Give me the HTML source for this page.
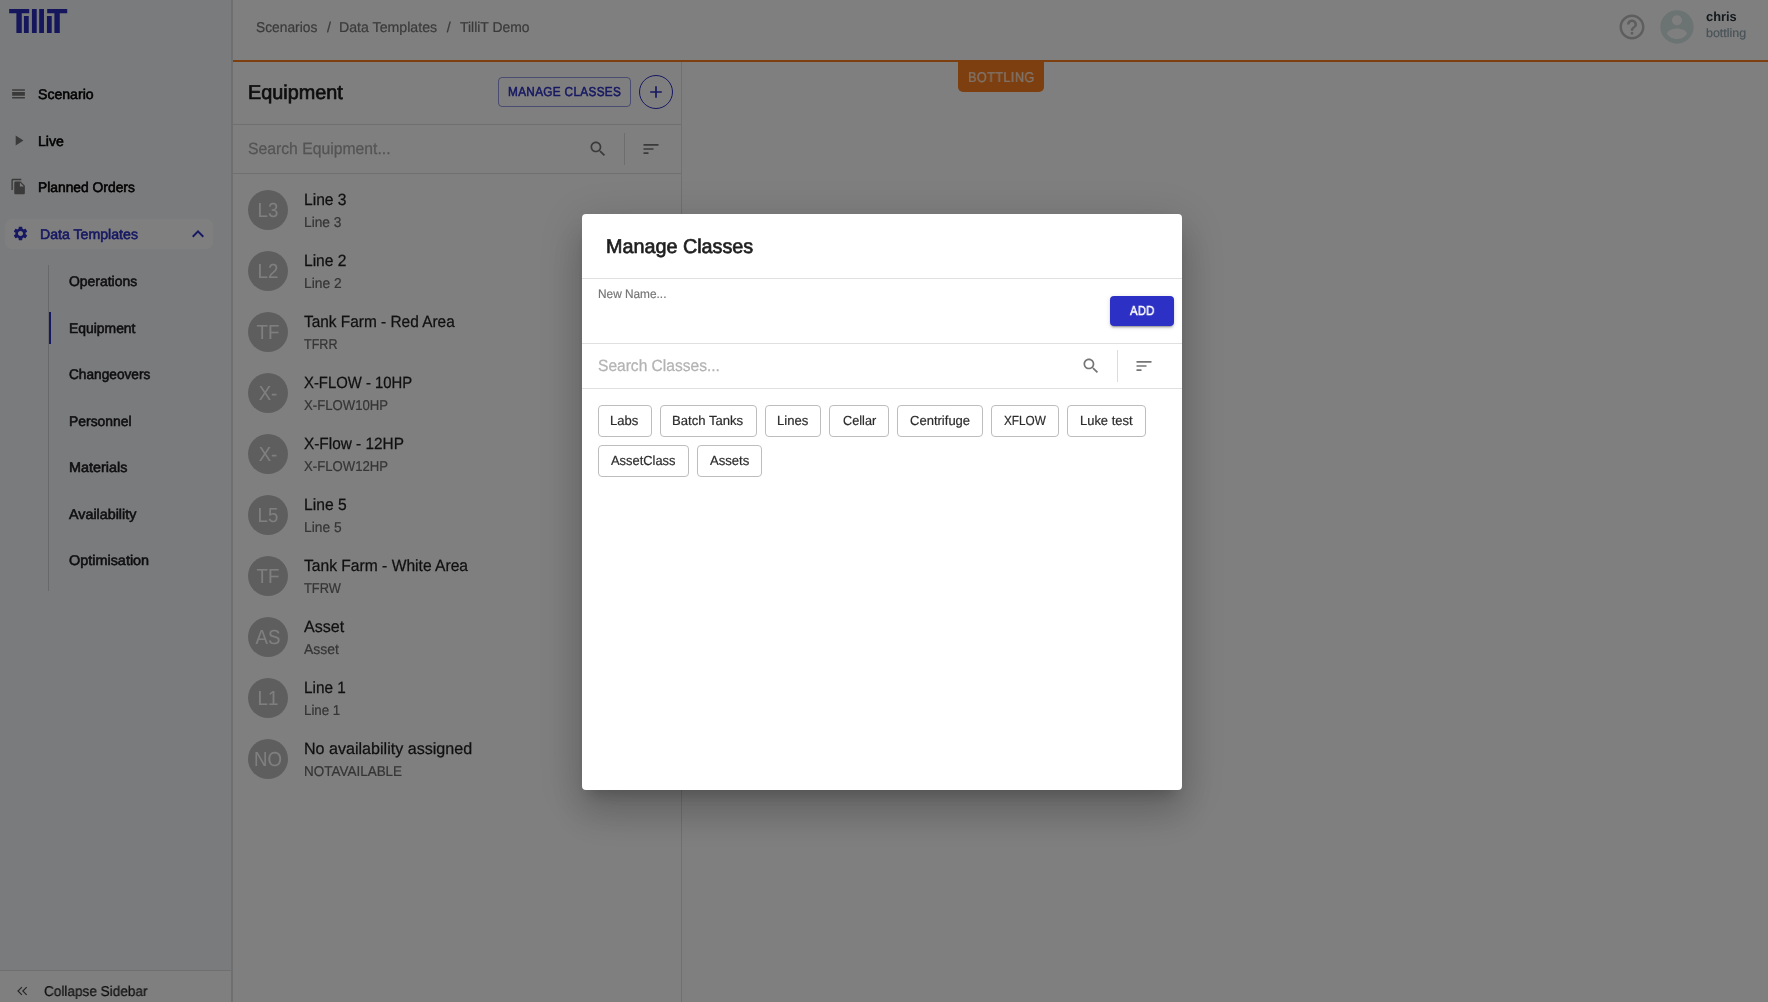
<!DOCTYPE html>
<html lang="en"><head><meta charset="utf-8"><title>TilliT - Equipment</title>
<style>
html,body{margin:0;padding:0}
body{width:1768px;height:1002px;overflow:hidden;background:#fff;font-family:"Liberation Sans",sans-serif;position:relative}
.t{position:absolute;line-height:1;white-space:pre;text-rendering:geometricPrecision}
.i{position:absolute;display:block;overflow:visible}
#app{position:absolute;left:0;top:0;width:1768px;height:1002px;overflow:hidden;background:#fff}
.sb{position:absolute;left:0;top:0;width:231px;height:1002px;background:#f4f6f8;border-right:1px solid #dedede}
.hl{position:absolute;left:5px;top:218.5px;width:208px;height:30.3px;border-radius:7px;background:#fff}
.vl{position:absolute;left:48px;top:265px;width:1px;height:325.5px;background:#d2d2d4}
.act{position:absolute;left:49px;top:312px;width:2px;height:32px;background:#2c30c4}
.cbar{position:absolute;left:0;top:971px;width:231px;height:31px;background:#fff}
.sbdiv{position:absolute;left:0;top:970px;width:231px;height:1px;background:#e0e0e0}
.oline{position:absolute;left:233px;top:60px;width:1535px;height:2px;background:#fb7f1e}
.tag{position:absolute;left:958px;top:62px;width:86px;height:30px;background:#fb7f1e;border-radius:0 0 5px 5px}
.panel{position:absolute;left:233px;top:62px;width:448px;height:940px;border-right:1px solid #e0e0e0;background:#fff}
.mainbl{position:absolute;left:232px;top:0;width:1px;height:1002px;background:#dedede}
.hd1{position:absolute;left:233px;top:124px;width:448px;height:1px;background:#e0e0e0}
.hd2{position:absolute;left:233px;top:173px;width:448px;height:1px;background:#e0e0e0}
.mbtn{position:absolute;left:498px;top:77px;width:131px;height:28px;border:1px solid rgba(44,48,196,0.5);border-radius:4px}
.pbtn{position:absolute;left:639px;top:75px;width:32px;height:32px;border:1px solid #2c30c4;border-radius:50%}
.vdiv{position:absolute;width:1px;height:32px;background:#dcdcdc}
.av{position:absolute;left:248px;width:40px;height:40px;border-radius:50%;background:#bdbdbd}
.avt{left:248px;width:40px;height:40px;color:#fff;font-size:20.3px;line-height:40px;text-align:center;transform:translateY(0.6px) scaleX(0.92)}
.L{position:absolute;left:0;top:0;will-change:transform}
#bd{position:absolute;left:0;top:0;width:1768px;height:1002px;background:rgba(0,0,0,0.5)}
#modal{position:absolute;left:582px;top:214px;width:600px;height:576px;background:#fff;border-radius:4px;box-shadow:0 11px 15px -7px rgba(0,0,0,.2),0 24px 38px 3px rgba(0,0,0,.14),0 9px 46px 8px rgba(0,0,0,.12)}
.md{position:absolute;left:0;width:600px;height:1px;background:#e0e0e0}
.add{position:absolute;left:528px;top:82px;width:64px;height:30px;border-radius:4px;background:#2c30c4;box-shadow:0 3px 1px -2px rgba(0,0,0,.2),0 2px 2px 0 rgba(0,0,0,.14),0 1px 5px 0 rgba(0,0,0,.12)}
.chip{position:absolute;height:32px;box-sizing:border-box;border:1px solid #bdbdbd;border-radius:4px;}
</style></head>
<body>
<div id="app">
<div class="sb"></div>
<svg class="i" style="left:10.3px;top:85px" width="17" height="17" viewBox="0 0 24 24" fill="#757575" ><path d="M3 17h18v2H3zm0-7h18v5H3zm0-4h18v2H3z"/></svg>
<svg class="i" style="left:10.3px;top:132px" width="17" height="17" viewBox="0 0 24 24" fill="#757575" ><path d="M8 5v14l11-7z"/></svg>
<svg class="i" style="left:10.4px;top:178px" width="17" height="17" viewBox="0 0 24 24" fill="#757575" ><path d="M16 1H4c-1.1 0-2 .9-2 2v14h2V3h12V1zm-1 4l6 6v10c0 1.1-.9 2-2 2H7.99C6.89 23 6 22.1 6 21l.01-14c0-1.1.89-2 1.99-2h7zm-1 7h5.5L14 6.5V12z"/></svg>
<div class="hl"></div>
<svg class="i" style="left:12.0px;top:225px" width="17" height="17" viewBox="0 0 24 24" fill="#2c30c4" ><path d="M19.14 12.94c.04-.3.06-.61.06-.94 0-.32-.02-.64-.07-.94l2.03-1.58c.18-.14.23-.41.12-.61l-1.92-3.32c-.12-.22-.37-.29-.59-.22l-2.39.96c-.5-.38-1.03-.7-1.62-.94l-.36-2.54c-.04-.24-.24-.41-.48-.41h-3.84c-.24 0-.43.17-.47.41l-.36 2.54c-.59.24-1.13.57-1.62.94l-2.39-.96c-.22-.08-.47 0-.59.22L2.74 8.87c-.12.21-.08.47.12.61l2.03 1.58c-.05.3-.09.63-.09.94s.02.64.07.94l-2.03 1.58c-.18.14-.23.41-.12.61l1.92 3.32c.12.22.37.29.59.22l2.39-.96c.5.38 1.03.7 1.62.94l.36 2.54c.05.24.24.41.48.41h3.84c.24 0 .44-.17.47-.41l.36-2.54c.59-.24 1.13-.56 1.62-.94l2.39.96c.22.08.47 0 .59-.22l1.92-3.32c.12-.22.07-.47-.12-.61l-2.01-1.58zM12 15.6c-1.98 0-3.6-1.62-3.6-3.6s1.62-3.6 3.6-3.6 3.6 1.62 3.6 3.6-1.62 3.6-3.6 3.6z"/></svg>
<svg class="i" style="left:186px;top:222px" width="24" height="24" viewBox="0 0 24 24" fill="#2c30c4" ><path d="M12 8l-6 6 1.41 1.41L12 10.83l4.59 4.58L18 14z"/></svg>
<div class="vl"></div><div class="act"></div>
<div class="sbdiv"></div>
<div class="cbar"></div>
<svg class="i" style="left:14px;top:983px" width="16" height="16" viewBox="0 0 16 16" fill="none" stroke="#4a4a4a" stroke-width="1.15" stroke-linecap="butt" stroke-linejoin="miter"><path d="M7.9 4.1 4.0 8l3.9 3.9M12.7 4.1 8.8 8l3.9 3.9"/></svg>
<div class="panel"></div>
<div class="mainbl"></div>
<svg class="i" style="left:1617px;top:12px" width="30" height="30" viewBox="0 0 24 24" fill="#bcbcbc" ><path d="M11 18h2v-2h-2v2zm1-16C6.48 2 2 6.48 2 12s4.48 10 10 10 10-4.48 10-10S17.52 2 12 2zm0 18c-4.41 0-8-3.59-8-8s3.59-8 8-8 8 3.59 8 8-3.59 8-8 8zm0-14c-2.21 0-4 1.79-4 4h2c0-1.1.9-2 2-2s2 .9 2 2c0 2-3 1.75-3 5h2c0-2.25 3-2.5 3-5 0-2.21-1.79-4-4-4z"/></svg>
<svg class="i" style="left:1657px;top:7px" width="40" height="40" viewBox="0 0 24 24" fill="#d6e6e6" ><path d="M12 2C6.48 2 2 6.48 2 12s4.48 10 10 10 10-4.48 10-10S17.52 2 12 2zm0 3c1.66 0 3 1.34 3 3s-1.34 3-3 3-3-1.34-3-3 1.34-3 3-3zm0 14.2c-2.5 0-4.71-1.28-6-3.22.03-1.99 4-3.08 6-3.08 1.99 0 5.97 1.09 6 3.08-1.29 1.94-3.5 3.22-6 3.22z"/></svg>
<div class="tag"></div>
<div class="oline"></div><div class="hd1"></div><div class="hd2"></div>
<div class="mbtn"></div><div class="pbtn"></div>
<svg class="i" style="left:646px;top:82px" width="20" height="20" viewBox="0 0 24 24" fill="#2c30c4" ><path d="M19 13h-6v6h-2v-6H5v-2h6V5h2v6h6v2z"/></svg>
<svg class="i" style="left:587.5px;top:139px" width="20" height="20" viewBox="0 0 24 24" fill="#757575" ><path d="M15.5 14h-.79l-.28-.27C15.41 12.59 16 11.11 16 9.5 16 5.91 13.09 3 9.5 3S3 5.91 3 9.5 5.91 16 9.5 16c1.61 0 3.09-.59 4.23-1.57l.27.28v.79l5 4.99L20.49 19l-4.99-5zm-6 0C7.01 14 5 11.99 5 9.5S7.01 5 9.5 5 14 7.01 14 9.5 11.99 14 9.5 14z"/></svg>
<div class="vdiv" style="left:624px;top:133px"></div>
<svg class="i" style="left:640.5px;top:139px" width="20" height="20" viewBox="0 0 24 24" fill="#757575" ><path d="M3 18h6v-2H3v2zM3 6v2h18V6H3zm0 7h12v-2H3v2z"/></svg>
<div class="av" style="top:190px"></div>
<div class="av" style="top:251px"></div>
<div class="av" style="top:312px"></div>
<div class="av" style="top:373px"></div>
<div class="av" style="top:434px"></div>
<div class="av" style="top:495px"></div>
<div class="av" style="top:556px"></div>
<div class="av" style="top:617px"></div>
<div class="av" style="top:678px"></div>
<div class="av" style="top:739px"></div>
<div class="L">
<svg class="i" style="left:0;top:0" width="80" height="45" viewBox="0 0 80 45" font-family="Liberation Sans, sans-serif" font-weight="700" font-size="34.9" fill="#2a2cb8"><defs><clipPath id="lc"><rect x="0" y="9" width="80" height="24"/></clipPath><clipPath id="li"><rect x="0" y="16" width="80" height="17"/></clipPath></defs><g clip-path="url(#lc)"><text transform="translate(8.95,33) scale(0.955,1)" stroke="#2a2cb8" stroke-width="0.5">T</text></g><g clip-path="url(#li)"><text x="21.6" y="33">i</text></g><g clip-path="url(#lc)"><text x="29.5 36.7" y="33">ll</text></g><g clip-path="url(#li)"><text x="44.55" y="33">i</text></g><g clip-path="url(#lc)"><text transform="translate(46.95,33) scale(0.955,1)" stroke="#2a2cb8" stroke-width="0.5">T</text></g></svg>
<span class="t" style="left:37.60px;top:87px;color:#000;font-size:14.0px;-webkit-text-stroke:0.56px;transform:scaleX(1.0065);transform-origin:0 0;">Scenario</span>
<span class="t" style="left:37.60px;top:134px;color:#000;font-size:14.0px;-webkit-text-stroke:0.56px;transform:scaleX(1.0078);transform-origin:0 0;">Live</span>
<span class="t" style="left:37.60px;top:180px;color:#000;font-size:14.0px;-webkit-text-stroke:0.56px;transform:scaleX(0.9878);transform-origin:0 0;">Planned Orders</span>
<span class="t" style="left:39.60px;top:227px;color:#2c30c4;font-size:14.0px;-webkit-text-stroke:0.56px;transform:scaleX(1.0099);transform-origin:0 0;">Data Templates</span>
<span class="t" style="left:69.30px;top:274px;color:#1c1c20;font-size:14.0px;-webkit-text-stroke:0.56px;transform:scaleX(0.9948);transform-origin:0 0;">Operations</span>
<span class="t" style="left:69.30px;top:321px;color:#1c1c20;font-size:14.0px;-webkit-text-stroke:0.56px;transform:scaleX(0.9928);transform-origin:0 0;">Equipment</span>
<span class="t" style="left:69.30px;top:367px;color:#1c1c20;font-size:14.0px;-webkit-text-stroke:0.56px;transform:scaleX(0.9766);transform-origin:0 0;">Changeovers</span>
<span class="t" style="left:69.30px;top:414px;color:#1c1c20;font-size:14.0px;-webkit-text-stroke:0.56px;transform:scaleX(0.9931);transform-origin:0 0;">Personnel</span>
<span class="t" style="left:69.30px;top:460px;color:#1c1c20;font-size:14.0px;-webkit-text-stroke:0.56px;transform:scaleX(1.0295);transform-origin:0 0;">Materials</span>
<span class="t" style="left:69.30px;top:507px;color:#1c1c20;font-size:14.0px;-webkit-text-stroke:0.56px;transform:scaleX(1.0217);transform-origin:0 0;">Availability</span>
<span class="t" style="left:69.30px;top:553px;color:#1c1c20;font-size:14.0px;-webkit-text-stroke:0.56px;transform:scaleX(1.0299);transform-origin:0 0;">Optimisation</span>
<span class="t" style="left:43.72px;top:985px;color:#222;font-size:14.24px;-webkit-text-stroke:0.22px;transform:scaleX(0.9549);transform-origin:0 0;">Collapse Sidebar</span>
<span class="t" style="left:256.20px;top:21px;color:#757575;font-size:14.24px;-webkit-text-stroke:0.22px;transform:scaleX(0.9689);transform-origin:0 0;">Scenarios</span>
<span class="t" style="left:326.91px;top:21px;color:#757575;font-size:14.24px;-webkit-text-stroke:0.22px;">/</span>
<span class="t" style="left:339.06px;top:21px;color:#757575;font-size:14.24px;-webkit-text-stroke:0.22px;transform:scaleX(0.9945);transform-origin:0 0;">Data Templates</span>
<span class="t" style="left:446.71px;top:21px;color:#757575;font-size:14.24px;-webkit-text-stroke:0.22px;">/</span>
<span class="t" style="left:459.96px;top:21px;color:#757575;font-size:14.24px;-webkit-text-stroke:0.22px;transform:scaleX(0.9761);transform-origin:0 0;">TilliT Demo</span>
<span class="t" style="left:1705.84px;top:10px;color:#263238;font-size:13.0px;font-weight:700;transform:scaleX(0.9868);transform-origin:0 0;">chris</span>
<span class="t" style="left:1705.72px;top:27px;color:#90a4ae;font-size:12.2px;-webkit-text-stroke:0.19px;transform:scaleX(1.0233);transform-origin:0 0;">bottling</span>
<span class="t" style="left:968.16px;top:71px;color:rgba(255,255,255,0.78);font-size:14.24px;-webkit-text-stroke:0.22px;letter-spacing:0.350px;transform:scaleX(0.9005);transform-origin:0 0;">BOTTLING</span>
<span class="t" style="left:248.29px;top:83px;color:#1a1a1a;font-size:20.0px;-webkit-text-stroke:0.68px;transform:scaleX(0.9917);transform-origin:0 0;">Equipment</span>
<span class="t" style="left:508.29px;top:85px;color:#2c30c4;font-size:13.0px;-webkit-text-stroke:0.52px;letter-spacing:0.350px;transform:scaleX(0.9067);transform-origin:0 0;">MANAGE CLASSES</span>
<span class="t" style="left:248.09px;top:141px;color:#a8a8a8;font-size:16.27px;-webkit-text-stroke:0.26px;transform:scaleX(0.9672);transform-origin:0 0;">Search Equipment...</span>
<span class="t" style="left:304.10px;top:192px;color:#1f1f1f;font-size:16.27px;-webkit-text-stroke:0.26px;transform:scaleX(0.9585);transform-origin:0 0;">Line 3</span>
<span class="t" style="left:304.10px;top:216px;color:#6a6a6a;font-size:14.24px;-webkit-text-stroke:0.22px;transform:scaleX(0.9634);transform-origin:0 0;">Line 3</span>
<span class="t" style="left:304.10px;top:253px;color:#1f1f1f;font-size:16.27px;-webkit-text-stroke:0.26px;transform:scaleX(0.9576);transform-origin:0 0;">Line 2</span>
<span class="t" style="left:304.10px;top:277px;color:#6a6a6a;font-size:14.24px;-webkit-text-stroke:0.22px;transform:scaleX(0.9697);transform-origin:0 0;">Line 2</span>
<span class="t" style="left:304.10px;top:314px;color:#1f1f1f;font-size:16.27px;-webkit-text-stroke:0.26px;transform:scaleX(0.9472);transform-origin:0 0;">Tank Farm - Red Area</span>
<span class="t" style="left:304.10px;top:338px;color:#6a6a6a;font-size:14.24px;-webkit-text-stroke:0.22px;transform:scaleX(0.8829);transform-origin:0 0;">TFRR</span>
<span class="t" style="left:304.10px;top:375px;color:#1f1f1f;font-size:16.27px;-webkit-text-stroke:0.26px;transform:scaleX(0.9136);transform-origin:0 0;">X-FLOW - 10HP</span>
<span class="t" style="left:304.10px;top:399px;color:#6a6a6a;font-size:14.24px;-webkit-text-stroke:0.22px;transform:scaleX(0.9239);transform-origin:0 0;">X-FLOW10HP</span>
<span class="t" style="left:304.10px;top:436px;color:#1f1f1f;font-size:16.27px;-webkit-text-stroke:0.26px;transform:scaleX(0.9445);transform-origin:0 0;">X-Flow - 12HP</span>
<span class="t" style="left:304.10px;top:460px;color:#6a6a6a;font-size:14.24px;-webkit-text-stroke:0.22px;transform:scaleX(0.9239);transform-origin:0 0;">X-FLOW12HP</span>
<span class="t" style="left:304.10px;top:497px;color:#1f1f1f;font-size:16.27px;-webkit-text-stroke:0.26px;transform:scaleX(0.9621);transform-origin:0 0;">Line 5</span>
<span class="t" style="left:304.10px;top:521px;color:#6a6a6a;font-size:14.24px;-webkit-text-stroke:0.22px;transform:scaleX(0.9684);transform-origin:0 0;">Line 5</span>
<span class="t" style="left:304.10px;top:558px;color:#1f1f1f;font-size:16.27px;-webkit-text-stroke:0.26px;transform:scaleX(0.9602);transform-origin:0 0;">Tank Farm - White Area</span>
<span class="t" style="left:304.10px;top:582px;color:#6a6a6a;font-size:14.24px;-webkit-text-stroke:0.22px;transform:scaleX(0.9034);transform-origin:0 0;">TFRW</span>
<span class="t" style="left:304.10px;top:619px;color:#1f1f1f;font-size:16.27px;-webkit-text-stroke:0.26px;transform:scaleX(0.9870);transform-origin:0 0;">Asset</span>
<span class="t" style="left:304.10px;top:643px;color:#6a6a6a;font-size:14.24px;-webkit-text-stroke:0.22px;transform:scaleX(0.9809);transform-origin:0 0;">Asset</span>
<span class="t" style="left:304.10px;top:680px;color:#1f1f1f;font-size:16.27px;-webkit-text-stroke:0.26px;transform:scaleX(0.9435);transform-origin:0 0;">Line 1</span>
<span class="t" style="left:304.10px;top:704px;color:#6a6a6a;font-size:14.24px;-webkit-text-stroke:0.22px;transform:scaleX(0.9351);transform-origin:0 0;">Line 1</span>
<span class="t" style="left:304.10px;top:741px;color:#1f1f1f;font-size:16.27px;-webkit-text-stroke:0.26px;transform:scaleX(0.9888);transform-origin:0 0;">No availability assigned</span>
<span class="t" style="left:304.10px;top:765px;color:#6a6a6a;font-size:14.24px;-webkit-text-stroke:0.22px;transform:scaleX(0.9466);transform-origin:0 0;">NOTAVAILABLE</span>
<span class="t avt" style="top:190px">L3</span>
<span class="t avt" style="top:251px">L2</span>
<span class="t avt" style="top:312px">TF</span>
<span class="t avt" style="top:373px">X-</span>
<span class="t avt" style="top:434px">X-</span>
<span class="t avt" style="top:495px">L5</span>
<span class="t avt" style="top:556px">TF</span>
<span class="t avt" style="top:617px">AS</span>
<span class="t avt" style="top:678px">L1</span>
<span class="t avt" style="top:739px">NO</span>
</div>
</div>
<div id="bd"></div>
<div id="modal">
<div class="md" style="top:64px"></div><div class="md" style="top:129px"></div><div class="md" style="top:174px"></div>
<div class="add"></div>
<svg class="i" style="left:499px;top:142px" width="20" height="20" viewBox="0 0 24 24" fill="#757575" ><path d="M15.5 14h-.79l-.28-.27C15.41 12.59 16 11.11 16 9.5 16 5.91 13.09 3 9.5 3S3 5.91 3 9.5 5.91 16 9.5 16c1.61 0 3.09-.59 4.23-1.57l.27.28v.79l5 4.99L20.49 19l-4.99-5zm-6 0C7.01 14 5 11.99 5 9.5S7.01 5 9.5 5 14 7.01 14 9.5 11.99 14 9.5 14z"/></svg>
<div class="vdiv" style="left:535px;top:136px"></div>
<svg class="i" style="left:552px;top:142px" width="20" height="20" viewBox="0 0 24 24" fill="#757575" ><path d="M3 18h6v-2H3v2zM3 6v2h18V6H3zm0 7h12v-2H3v2z"/></svg>
<div class="chip" style="left:16px;top:191px;width:54px"></div>
<div class="chip" style="left:78px;top:191px;width:97px"></div>
<div class="chip" style="left:183px;top:191px;width:56px"></div>
<div class="chip" style="left:247px;top:191px;width:60px"></div>
<div class="chip" style="left:315px;top:191px;width:86px"></div>
<div class="chip" style="left:409px;top:191px;width:68px"></div>
<div class="chip" style="left:485px;top:191px;width:79px"></div>
<div class="chip" style="left:16px;top:231px;width:91px"></div>
<div class="chip" style="left:115px;top:231px;width:65px"></div>
<div class="L" style="left:-582px;top:-214px"><span class="t" style="left:606.10px;top:237px;color:#1e1e1e;font-size:20.0px;-webkit-text-stroke:0.68px;transform:scaleX(0.9883);transform-origin:0 0;">Manage Classes</span>
<span class="t" style="left:598.23px;top:288px;color:#757575;font-size:12.2px;-webkit-text-stroke:0.19px;transform:scaleX(0.9715);transform-origin:0 0;">New Name...</span>
<span class="t" style="left:1129.73px;top:304px;color:#fff;font-size:13.0px;-webkit-text-stroke:0.52px;letter-spacing:0.350px;transform:scaleX(0.8647);transform-origin:0 0;">ADD</span>
<span class="t" style="left:598.10px;top:358px;color:#b3b3b3;font-size:16.27px;-webkit-text-stroke:0.26px;transform:scaleX(0.9564);transform-origin:0 0;">Search Classes...</span>
<span class="t" style="left:610.23px;top:414px;color:#2b2b2b;font-size:13.22px;-webkit-text-stroke:0.21px;transform:scaleX(0.9881);transform-origin:0 0;">Labs</span>
<span class="t" style="left:672.23px;top:414px;color:#2b2b2b;font-size:13.22px;-webkit-text-stroke:0.21px;transform:scaleX(0.9911);transform-origin:0 0;">Batch Tanks</span>
<span class="t" style="left:777.43px;top:414px;color:#2b2b2b;font-size:13.22px;-webkit-text-stroke:0.21px;transform:scaleX(0.9893);transform-origin:0 0;">Lines</span>
<span class="t" style="left:842.65px;top:414px;color:#2b2b2b;font-size:13.22px;-webkit-text-stroke:0.21px;transform:scaleX(0.9613);transform-origin:0 0;">Cellar</span>
<span class="t" style="left:909.74px;top:414px;color:#2b2b2b;font-size:13.22px;-webkit-text-stroke:0.21px;transform:scaleX(0.9857);transform-origin:0 0;">Centrifuge</span>
<span class="t" style="left:1004.00px;top:414px;color:#2b2b2b;font-size:13.22px;-webkit-text-stroke:0.21px;transform:scaleX(0.8909);transform-origin:0 0;">XFLOW</span>
<span class="t" style="left:1080.04px;top:414px;color:#2b2b2b;font-size:13.22px;-webkit-text-stroke:0.21px;transform:scaleX(0.9792);transform-origin:0 0;">Luke test</span>
<span class="t" style="left:611.13px;top:454px;color:#2b2b2b;font-size:13.22px;-webkit-text-stroke:0.21px;transform:scaleX(0.9745);transform-origin:0 0;">AssetClass</span>
<span class="t" style="left:710.42px;top:454px;color:#2b2b2b;font-size:13.22px;-webkit-text-stroke:0.21px;transform:scaleX(0.9892);transform-origin:0 0;">Assets</span></div>
</div>
</body></html>
